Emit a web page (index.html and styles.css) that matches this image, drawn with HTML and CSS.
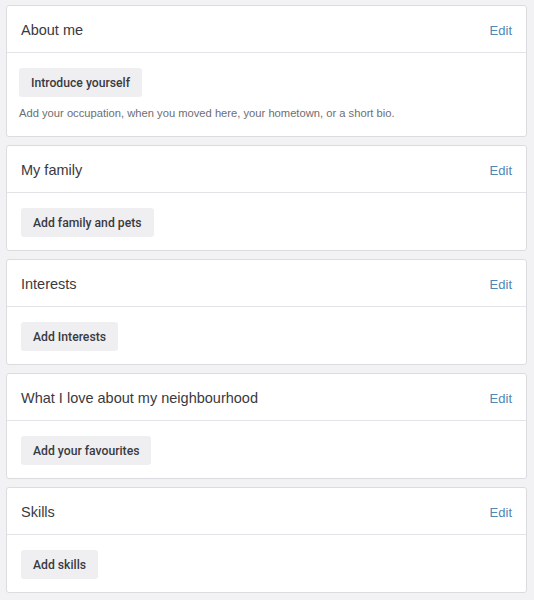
FILE: index.html
```html
<!DOCTYPE html>
<html>
<head>
<meta charset="utf-8">
<link rel="stylesheet" href="styles.css">
</head>
<body>
<div class="page">
  <section class="card">
    <div class="card-head"><h2 class="title">About me</h2><a class="edit">Edit</a></div>
    <div class="card-body card-body-intro">
      <button class="btn">Introduce yourself</button>
      <p class="hint">Add your occupation, when you moved here, your hometown, or a short bio.</p>
    </div>
  </section>
  <section class="card">
    <div class="card-head"><h2 class="title">My family</h2><a class="edit">Edit</a></div>
    <div class="card-body"><button class="btn">Add family and pets</button></div>
  </section>
  <section class="card">
    <div class="card-head"><h2 class="title">Interests</h2><a class="edit">Edit</a></div>
    <div class="card-body"><button class="btn">Add Interests</button></div>
  </section>
  <section class="card">
    <div class="card-head"><h2 class="title">What I love about my neighbourhood</h2><a class="edit">Edit</a></div>
    <div class="card-body"><button class="btn">Add your favourites</button></div>
  </section>
  <section class="card">
    <div class="card-head"><h2 class="title">Skills</h2><a class="edit">Edit</a></div>
    <div class="card-body"><button class="btn">Add skills</button></div>
  </section>
</div>
</body>
</html>
```
FILE: styles.css
```css
html, body {
  margin: 0;
  padding: 0;
  background: #f2f2f4;
  font-family: "Liberation Sans", Arial, sans-serif;
}
.page {
  display: flex;
  flex-direction: column;
  gap: 8px;
  padding: 5px 7px 0 6px;
}
.card {
  background: #ffffff;
  border: 1px solid #dcdce0;
  border-radius: 3px;
}
.card-head {
  display: flex;
  align-items: center;
  justify-content: space-between;
  height: 44px;
  padding: 2px 14px 0 14px;
  border-bottom: 1px solid #e4e4e8;
}
.title {
  margin: 0;
  font-size: 14.5px;
  font-weight: normal;
  color: #3a3a3e;
}
.edit {
  font-size: 13px;
  color: #4f87b5;
  cursor: pointer;
}
.card-body {
  padding: 15px 14px 13px 14px;
}
.card-body-intro {
  padding-left: 12px;
}
.btn {
  display: inline-block;
  height: 29px;
  padding: 0 12px;
  border: none;
  border-radius: 3px;
  background: #efeff2;
  font-family: Roboto, "Liberation Sans", Arial, sans-serif;
  font-size: 12.2px;
  font-weight: 500;
  color: #3a3a3e;
}
.hint {
  margin: 10px 0 4px 0;
  font-size: 11.2px;
  color: #6e6e72;
}
```
